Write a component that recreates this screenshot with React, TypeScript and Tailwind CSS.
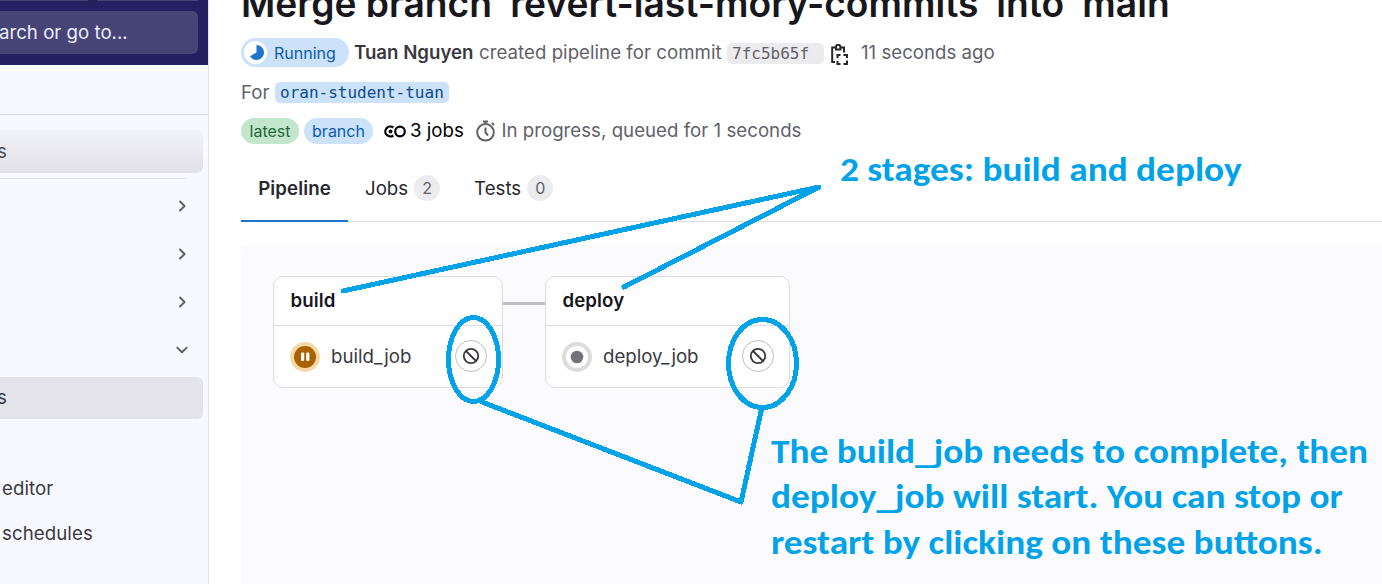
import type { ReactNode } from "react";

function Chevron({ down = false }: { down?: boolean }) {
  return (
    <svg width="16" height="16" viewBox="0 0 16 16" fill="none" stroke="#626168" strokeWidth="2" strokeLinecap="round" strokeLinejoin="round">
      <path d={down ? "M3.3 5.6 8 10.2l4.7-4.6" : "M6 3.5 10.6 8 6 12.5"} />
    </svg>
  );
}

function CancelButton() {
  return (
    <button className="mb-px flex size-8 items-center justify-center rounded-full border border-[#bfbfc3] bg-white">
      <svg width="18" height="18" viewBox="0 0 18 18" fill="none" stroke="#3a383f" strokeWidth="1.8">
        <circle cx="9" cy="9" r="7.2" />
        <path d="m4 4 10 10" />
      </svg>
    </button>
  );
}

function StageCard({ name, job, width, icon }: { name: string; job: string; width: string; icon: ReactNode }) {
  return (
    <section className={`flex h-28 flex-col rounded-[10px] border border-[#dcdcde] bg-white ${width}`}>
      <h2 className="flex h-[49px] items-center border-b border-[#dcdcde] pl-[16.500px] font-semibold tracking-[0.1px] text-[#18171d]">{name}</h2>
      <div className="flex flex-1 items-center pr-[15px] pl-4">
        {icon}
        <span className="ml-[11px] flex-1 text-[#3a383f]">{job}</span>
        <CancelButton />
      </div>
    </section>
  );
}

function Quote() {
  return <span className="relative -top-[5px] -mr-[3.400px]">'</span>;
}

function Count({ children }: { children: ReactNode }) {
  return <span className="ml-[6px] flex size-[26px] items-center justify-center rounded-full bg-[#ececef] text-base text-[#626168]">{children}</span>;
}

export default function App() {
  return (
    <div className="relative flex h-[584px] w-[1382px] overflow-hidden bg-white font-['Inter',sans-serif] text-[18.667px] whitespace-nowrap text-[#626168]">
      <aside className="flex w-[209px] shrink-0 flex-col border-r border-[#e3e2e8] bg-[#f8f9ff]">
        <div className="h-[65px] bg-[#232160]">
          <div className="flex h-px gap-[9px]">
            <div className="w-[88px] bg-[#474577]" />
            <div className="w-[101px] bg-[#474577]" />
          </div>
          <div className="mt-[10px] flex h-[43px] w-[198px] items-center rounded-r-md bg-[#474577] text-[#ececff]">
            <span className="-ml-px">arch or go to...</span>
          </div>
        </div>
        <div className="h-[50px] border-b border-[#d9d9df]" />
        <div className="mt-[15px] flex h-[43px] w-[203px] items-center rounded-r-md bg-linear-to-b from-[#f2f3f8] to-[#e4e3e9] to-80% text-[#4c4b51]">
          <span className="-ml-[3px]">s</span>
        </div>
        <div className="mt-[5px] h-px w-[187px] bg-[#e4e4ea]" />
        <div className="mt-[3px] flex flex-col items-end pr-[18px]">
          <div className="flex h-12 items-center"><Chevron /></div>
          <div className="flex h-12 items-center"><Chevron /></div>
          <div className="flex h-12 items-center"><Chevron /></div>
          <div className="flex h-12 items-center"><Chevron down /></div>
        </div>
        <div className="mt-[3px] flex h-[42px] w-[203px] items-center rounded-r-md bg-[#e4e3e9] text-[#3a383f]">
          <span className="-ml-[3px]">s</span>
        </div>
        <div className="mt-[47px] flex h-[45px] items-center pl-[2px] tracking-[0.080px] text-[#3a383f]">editor</div>
        <div className="flex h-[45px] items-center pl-[2px] tracking-[0.080px] text-[#3a383f]">schedules</div>
      </aside>

      <main className="flex min-w-0 flex-1 flex-col pl-8">
        <h1 className="-mt-[19px] h-[57px] text-[37.200px] leading-[46px] font-semibold text-[#18171d]">
          Merge branch <Quote />revert-last-mory-commits<Quote /> into <Quote />main<Quote />
        </h1>
        <div className="flex h-[29px] items-center">
          <span className="flex h-[29px] w-[108px] items-center rounded-full bg-[#cbe2f9] pl-[3px] text-base text-[#0b5cad]">
            <svg width="23" height="23" viewBox="0 0 23 23">
              <circle cx="11.500" cy="11.500" r="11.500" fill="#fff" />
              <path d="M12.500 11.500V4a7.500 7.500 0 1 1-6.500 11.250Z" fill="#1f75cb" />
            </svg>
            <span className="ml-[7px] pt-px">Running</span>
          </span>
          <b className="ml-[5px] font-semibold text-[#3a383f]">Tuan Nguyen</b>
          <span className="ml-[5.500px] tracking-[0.030px]">created pipeline for commit</span>
          <code className="mt-[2px] ml-[5.400px] flex h-[21px] w-[97px] items-center rounded-[5px] bg-[#ececef] pl-[5px] font-['DejaVu_Sans_Mono',monospace] text-base">7fc5b65f</code>
          <svg className="mt-1 ml-[7px]" width="17" height="21" viewBox="0 0 17 21" fill="none" stroke="#28272d" strokeWidth="2">
            <path d="M5 3.500H1.200V18H4M9.500 3.500H13V8.500" />
            <path d="M5 5.500V3a2.200 2.200 0 0 1 4.400 0v2.500Z" />
            <path d="M6.500 14v-3h3M12.500 11H16v3M16 16.500V20h-3.500M9.500 20h-3v-3" />
          </svg>
          <span className="ml-[13px]">11 seconds ago</span>
        </div>
        <div className="mt-[15px] flex h-[21px] items-center">
          <span>For</span>
          <code className="ml-[5.500px] flex h-[21px] w-[174px] items-center rounded-[5px] bg-[#cbe2f9] pl-[5px] font-['DejaVu_Sans_Mono',monospace] text-base text-[#0b4a8c]">oran-student-tuan</code>
        </div>
        <div className="mt-[15px] flex h-[26px] items-center">
          <span className="flex h-[26px] w-[58px] items-center justify-center rounded-full bg-[#c3e6cd] text-base text-[#24663b]">latest</span>
          <span className="ml-[5px] flex h-[26px] w-[69px] items-center justify-center rounded-full bg-[#cbe2f9] text-base text-[#0b5cad]">branch</span>
          <svg className="ml-[11px]" width="22" height="13" viewBox="0 0 22 13" fill="none" stroke="#000" strokeWidth="2.200">
            <path d="M9.300 2.500A5 5 0 1 0 9.300 10.500" />
            <circle cx="16" cy="6.500" r="4.800" />
            <circle cx="6.500" cy="6.500" r="1.900" fill="#000" stroke="none" />
          </svg>
          <span className="ml-[4px] text-black">3 jobs</span>
          <svg className="ml-[12px]" width="20" height="22" viewBox="0 0 20 22" fill="none" stroke="#626168" strokeWidth="2">
            <circle cx="9.500" cy="12.300" r="8.300" />
            <path d="M9.500 7.500v5l2.500 3M7 1.500h5M9.500 1.500V4M16 3l2 2" />
          </svg>
          <span className="ml-[5.700px] tracking-[0.020px]">In progress, queued for 1 seconds</span>
        </div>
        <nav className="mt-[11px] flex h-[67px] border-b border-[#dcdcde] text-[#28272d]">
          <div className="flex h-[67px] w-[107px] items-center justify-center border-b-2 border-[#1f75cb] font-semibold">
            <span className="pt-[2px] tracking-[0.100px]">Pipeline</span>
          </div>
          <div className="flex items-center pl-[17px]">
            <span className="pt-[2px]">Jobs</span>
            <Count>2</Count>
          </div>
          <div className="flex items-center pl-[34px]">
            <span className="pt-[2px]">Tests</span>
            <Count>0</Count>
          </div>
        </nav>
        <div className="mt-[22px] flex flex-1 items-start rounded-tl-[10px] bg-[#fbfafd] pt-8 pl-8">
          <StageCard
            name="build"
            job="build_job"
            width="w-[230px]"
            icon={
              <svg width="30" height="30" viewBox="0 0 30 30">
                <circle cx="15" cy="15" r="15" fill="#f5d9a8" />
                <circle cx="15" cy="15" r="11" fill="#ab6100" />
                <rect x="11" y="10.500" width="3.200" height="8.500" rx="1" fill="#fff" />
                <rect x="16.200" y="10.500" width="3.200" height="8.500" rx="1" fill="#fff" />
              </svg>
            }
          />
          <div className="mt-[26px] h-[3px] w-[42px] bg-[#bfbfc3]" />
          <StageCard
            name="deploy"
            job="deploy_job"
            width="w-[245px]"
            icon={
              <svg width="30" height="30" viewBox="0 0 30 30">
                <circle cx="15" cy="15" r="13" fill="#fff" stroke="#dcdcde" strokeWidth="4" />
                <circle cx="15" cy="15" r="6.300" fill="#737278" />
              </svg>
            }
          />
        </div>
      </main>

      <svg className="pointer-events-none absolute inset-0" width="1382" height="584" viewBox="0 0 1382 584" fill="none" stroke="#00a2e8" strokeWidth="5" strokeLinecap="round" strokeLinejoin="round" shapeRendering="crispEdges">
        <path d="M343 291 819 187 624 287M482 402 741 502 762 407" />
        <ellipse cx="473.500" cy="359.500" rx="25" ry="42" />
        <ellipse cx="762.500" cy="363.500" rx="34" ry="44" />
      </svg>
      <div className="absolute top-[146px] left-[840px] scale-y-[0.94] font-['Carlito','Calibri','Lato',sans-serif] text-[37.300px] leading-[46px] font-bold text-[#00a2e8]">2 stages: build and deploy</div>
      <div className="absolute top-[428.500px] left-[771px] flex flex-col items-start font-['Carlito','Calibri','Lato',sans-serif] text-[37.300px] leading-[45.500px] font-bold text-[#00a2e8]">
        <span className="scale-y-[0.94]">The build_job needs to complete, then</span>
        <span className="scale-y-[0.94]">deploy_job will start. You can stop or</span>
        <span className="scale-y-[0.94]">restart by clicking on these buttons.</span>
      </div>
    </div>
  );
}
